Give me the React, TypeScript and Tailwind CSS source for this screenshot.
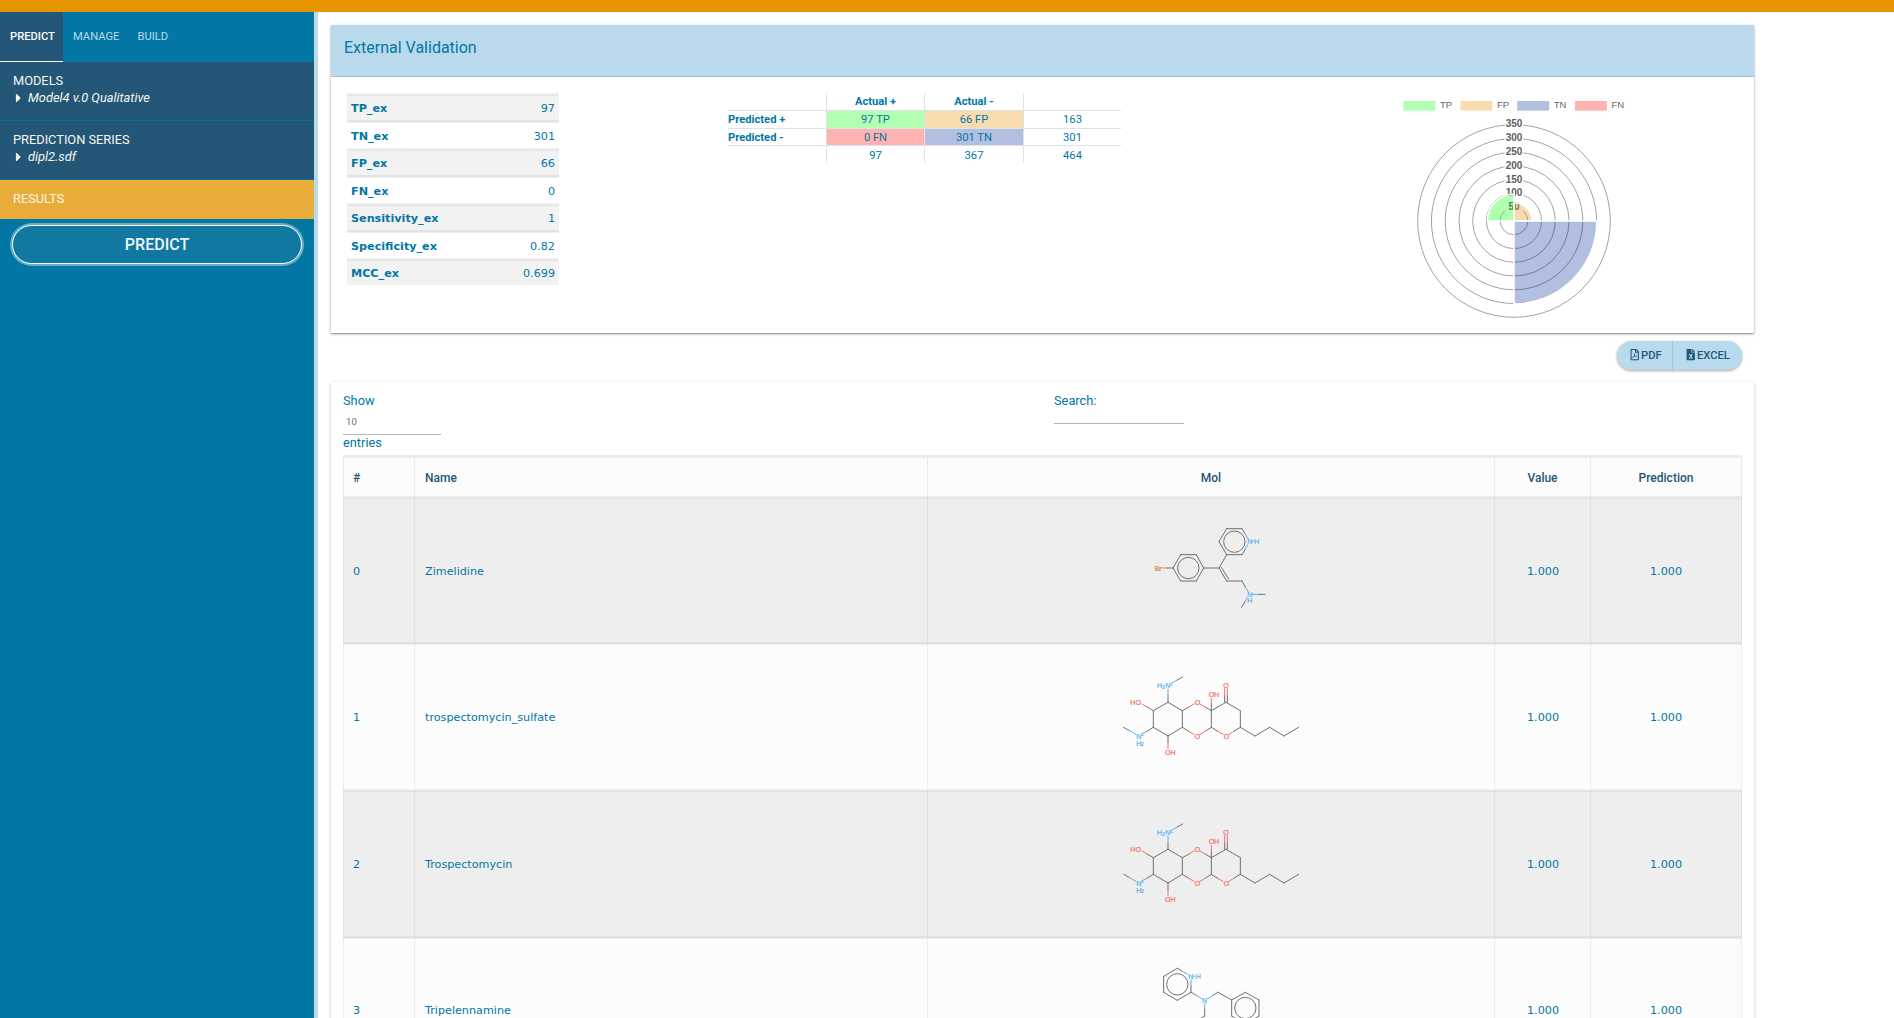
import React from "react";
import { FaCaretRight, FaFileExcel, FaRegFilePdf } from "react-icons/fa";

const GREY = "#707070";
const BLUE = "#5db2ea";
const RED = "#f4716b";
const BROWN = "#e08548";

type Seg = [number, number, number, number, string?];
type Atom = [number, number, string, string, number?];

function Mol({ top, segs, rings, atoms }: { top: number; segs: Seg[]; rings: [number, number][]; atoms: Atom[] }) {
  return (
    <svg className="-mt-[2px] h-[146px] w-[240px]" viewBox={`-28 ${top} 720 438`} fill="none">
      <g strokeWidth="3">
        {segs.map(([a, b, c, d, color], i) => (
          <line key={i} x1={a} y1={b} x2={c} y2={d} stroke={color || GREY} strokeLinecap="round" />
        ))}
        {rings.map(([x, y], i) => (
          <circle key={i} cx={x} cy={y} r="32" stroke={GREY} />
        ))}
      </g>
      {atoms.map(([x, y, t, color, size], i) => (
        <text
          key={i}
          x={x}
          y={y}
          fill={color}
          stroke={color}
          strokeWidth="0.7"
          fontSize={size || 21}
          fontFamily='"Liberation Sans", Arial, sans-serif'
        >
          {t}
        </text>
      ))}
    </svg>
  );
}

const zimelidine = (
  <Mol
    top={-12}
    rings={[[264, 204], [402, 125]]}
    segs={[
      [184, 204, 200, 204, BROWN], [200, 204, 218, 204],
      [218, 204, 241, 164], [241, 164, 288, 164], [288, 164, 310, 204], [310, 204, 288, 243], [288, 243, 241, 243], [241, 243, 218, 204],
      [310, 204, 356, 204], [356, 204, 379, 164], [379, 164, 356, 125], [356, 125, 379, 86], [379, 86, 425, 86],
      [425, 86, 435, 103], [435, 103, 444, 118, BLUE], [379, 164, 425, 164], [425, 164, 434, 149], [434, 149, 442, 134, BLUE],
      [356, 204, 379, 243], [363, 202, 385, 237], [379, 243, 425, 243], [425, 243, 435, 261], [435, 261, 444, 276, BLUE],
      [458, 283, 476, 283, BLUE], [476, 283, 494, 283], [424, 322, 434, 305], [434, 305, 441, 293, BLUE],
    ]}
    atoms={[[163, 213, "Br", BROWN], [441, 132, "N", BLUE], [454, 126, "+", BLUE, 12], [462, 132, "H", BLUE], [441, 291, "N", BLUE], [454, 285, "+", BLUE, 12], [441, 309, "H", BLUE]]}
  />
);

const trospectomycin = (
  <Mol
    top={-24}
    rings={[]}
    segs={[
      [247, 81, 229, 91], [229, 91, 212, 101, BLUE], [203, 117, 203, 137, BLUE], [203, 137, 203, 157],
      [203, 157, 159, 182], [159, 182, 141, 171], [141, 171, 125, 162, RED], [159, 182, 159, 232], [159, 232, 141, 243], [141, 243, 124, 252, BLUE],
      [70, 232, 88, 242], [88, 242, 107, 253, BLUE], [159, 232, 203, 258], [203, 258, 203, 278], [203, 278, 203, 296, RED],
      [203, 258, 246, 232], [246, 232, 246, 182], [246, 182, 203, 157],
      [246, 182, 264, 172], [264, 172, 281, 162, RED], [299, 162, 316, 172, RED], [316, 172, 333, 182],
      [333, 182, 333, 162], [333, 162, 333, 145, RED], [333, 182, 333, 232], [333, 232, 316, 243], [316, 243, 299, 253, RED],
      [246, 232, 264, 243], [264, 243, 281, 253, RED], [333, 182, 377, 157],
      [373, 157, 373, 137], [381, 157, 381, 137], [373, 137, 373, 116, RED], [381, 137, 381, 116, RED],
      [377, 157, 420, 182], [420, 182, 420, 232], [420, 232, 402, 243], [402, 243, 386, 253, RED],
      [333, 232, 351, 243], [351, 243, 368, 253, RED],
      [420, 232, 464, 258], [464, 258, 508, 232], [508, 232, 551, 258], [551, 258, 595, 232],
    ]}
    atoms={[
      [170, 115, "H", BLUE], [185, 117, "2", BLUE, 15], [195, 115, "N", BLUE], [210, 107, "+", BLUE, 12],
      [90, 166, "HO", RED], [108, 267, "N", BLUE], [123, 259, "+", BLUE, 12], [108, 289, "H", BLUE], [122, 289, "2", BLUE, 15],
      [194, 316, "OH", RED], [283, 166, "O", RED], [325, 142, "OH", RED], [369, 115, "O", RED],
      [283, 268, "O", RED], [370, 268, "O", RED],
    ]}
  />
);

const tripelennamine = (
  <Mol
    top={18}
    rings={[[231, 163], [435, 234]]}
    segs={[
      [231, 115, 246, 124], [246, 124, 261, 132, BLUE], [231, 115, 190, 139], [190, 139, 190, 187], [190, 187, 231, 211], [231, 211, 272, 187],
      [272, 187, 272, 167], [272, 167, 272, 149, BLUE], [272, 187, 288, 196], [288, 196, 304, 206, BLUE],
      [322, 206, 338, 196, BLUE], [338, 196, 353, 187], [353, 187, 394, 210],
      [394, 210, 435, 187], [435, 187, 476, 210], [476, 210, 476, 258], [476, 258, 435, 282], [435, 282, 394, 258], [394, 258, 394, 210],
      [313, 221, 313, 238, BLUE], [313, 238, 313, 258], [313, 258, 272, 282],
    ]}
    atoms={[[264, 147, "N", BLUE], [278, 141, "+", BLUE, 12], [286, 147, "H", BLUE], [305, 219, "N", BLUE]]}
  />
);

const results = [
  { id: 0, name: "Zimelidine", mol: zimelidine, h: "h-[146px]" },
  { id: 1, name: "trospectomycin_sulfate", mol: trospectomycin, h: "h-[147px]" },
  { id: 2, name: "Trospectomycin", mol: trospectomycin, h: "h-[147px]" },
  { id: 3, name: "Tripelennamine", mol: tripelennamine, h: "h-[147px]" },
];

const stats = [
  ["TP_ex", "97"],
  ["TN_ex", "301"],
  ["FP_ex", "66"],
  ["FN_ex", "0"],
  ["Sensitivity_ex", "1"],
  ["Specificity_ex", "0.82"],
  ["MCC_ex", "0.699"],
];

const DEJAVU = "font-['DejaVu_Sans',sans-serif]";
const COLS = "grid grid-cols-[71px_513px_567px_96px_152px]";

function Sidebar() {
  return (
    <aside className="w-[318px] shrink-0 border-r-4 border-[#b8daec] bg-[#0277a3] text-white">
      <nav className="flex h-[50px] text-[11.2px] font-medium">
        <div className="w-[63px] border-b border-white bg-[#235677] pt-[16px] pl-[10px] leading-[18px]">PREDICT</div>
        <div className="pt-[16px] pl-[10px] font-normal leading-[18px] text-[#b8daec]">MANAGE</div>
        <div className="pt-[16px] pl-[18px] font-normal leading-[18px] text-[#b8daec]">BUILD</div>
      </nav>
      <div className="text-[12.8px] leading-[17px] text-[#f7f7ee]">
        <section className="h-[59px] border-b border-[#0d6c97] bg-[#235677] pt-[10px] pl-[13px]">
          <div>MODELS</div>
          <div className="flex items-center italic">
            <FaCaretRight className="mr-[3px] -ml-[1px] h-[14px] w-[13px]" />
            Model4 v.0 Qualitative
          </div>
        </section>
        <section className="h-[59px] border-b border-[#0d6c97] bg-[#235677] pt-[10px] pl-[13px]">
          <div>PREDICTION SERIES</div>
          <div className="flex items-center italic">
            <FaCaretRight className="mr-[3px] -ml-[1px] h-[14px] w-[13px]" />
            dipl2.sdf
          </div>
        </section>
        <section className="h-[39px] bg-[#eaac38] pt-[10px] pl-[13px]">RESULTS</section>
      </div>
      <button className="mt-[6px] ml-[12px] flex h-[39px] w-[290px] items-center justify-center rounded-full border border-white bg-[#1178a1] text-[16px] font-medium text-[#eef5f8] shadow-[0_0_0_2px_#66adca]">
        PREDICT
      </button>
    </aside>
  );
}

function PolarChart() {
  const step = 13.76;
  const legend: [number, string, string][] = [
    [23.5, "TP", "#b2ffb2"],
    [80.4, "FP", "#f8dcb0"],
    [137.2, "TN", "#b1bfe0"],
    [195, "FN", "#ffb2b2"],
  ];
  const arc = (r: number, sx: number, sy: number, ex: number, ey: number) =>
    `M134 141 L${134 + sx * r} ${141 + sy * r} A${r} ${r} 0 0 1 ${134 + ex * r} ${141 + ey * r} Z`;
  return (
    <svg className="h-[240px] w-[268px]" viewBox="0 0 268 240" fontFamily='"Liberation Sans", Arial, sans-serif'>
      {legend.map(([x, label, color]) => (
        <g key={label}>
          <rect x={x} y="21" width="32" height="9.6" fill={color} />
          <text x={x + 36.5} y="28" fontSize="9.6" fill="#666">
            {label}
          </text>
        </g>
      ))}
      {[1, 2, 3, 4, 5, 6, 7].map((k) => (
        <g key={k}>
          <circle cx="134" cy="141" r={k * step} fill="none" stroke="#969696" strokeWidth="0.9" />
          <rect x="124.5" y={141 - k * step - 6.5} width="19" height="12" fill="#fff" fillOpacity="0.85" />
          <text x="134" y={141 - k * step + 2.8} fontSize="10" fontWeight="bold" fill="#606060" textAnchor="middle">
            {k * 50}
          </text>
        </g>
      ))}
      <g stroke="#fff" strokeWidth="1.6">
        <path d={arc(26.7, -1, 0, 0, -1)} fill="#00ff00" fillOpacity="0.3" />
        <path d={arc(18.2, 0, -1, 1, 0)} fill="#e68a00" fillOpacity="0.3" />
        <path d={arc(82.8, 1, 0, 0, 1)} fill="#002a98" fillOpacity="0.3" />
      </g>
    </svg>
  );
}

function Confusion() {
  const v = "border-l border-[#dee2e6]";
  return (
    <div className="mt-[16px] grid h-[70px] w-[393px] grid-cols-[98px_98px_99px_98px] grid-rows-[17px_18px_17px_18px] text-center text-[11.2px] leading-[18px]">
      <div />
      <div className={`${v} font-bold`}>Actual +</div>
      <div className={`${v} font-bold`}>Actual -</div>
      <div className={v} />
      <div className="border-t border-[#dee2e6] text-left font-bold">Predicted +</div>
      <div className={`${v} border-t bg-[#b2ffb2]`}>97 TP</div>
      <div className={`${v} border-t bg-[#f8dcb0]`}>66 FP</div>
      <div className={`${v} border-t`}>163</div>
      <div className="border-t border-[#dee2e6] text-left font-bold">Predicted -</div>
      <div className={`${v} border-t bg-[#ffb2b2]`}>0 FN</div>
      <div className={`${v} border-t bg-[#b1bfe0]`}>301 TN</div>
      <div className={`${v} border-t`}>301</div>
      <div className="border-t border-[#dee2e6]" />
      <div className={`${v} border-t leading-[20px]`}>97</div>
      <div className={`${v} border-t leading-[20px]`}>367</div>
      <div className={`${v} border-t leading-[20px]`}>464</div>
    </div>
  );
}

export default function App() {
  return (
    <div className="flex h-[1018px] flex-col overflow-hidden bg-white font-['Roboto',sans-serif] text-[#0277a3]">
      <header className="h-[12px] shrink-0 bg-[#e69500]" />
      <div className="flex min-h-0 flex-1">
        <Sidebar />
        <main className="w-[1436px] pt-[13px] pl-[13px]">
          <section className="h-[308px] shadow-[0_1px_3px_rgba(0,0,0,0.28),0_1px_1px_rgba(0,0,0,0.22)]">
            <div className="h-[52px] border-b border-[#9fc0d2] bg-[#b8daec] pt-[12px] pl-[13px] text-[16px] leading-[22px]">
              External Validation
            </div>
            <div className="flex">
              <div className={`mt-[16px] ml-[16px] w-[212px] text-[11.2px] ${DEJAVU}`}>
                {stats.map(([k, val], i) => (
                  <div
                    key={k}
                    className={
                      i % 2 === 0
                        ? "flex h-[27px] items-center justify-between border-t-2 border-[#eeeeee] bg-[#f2f2f2] px-[4px] pt-[3px] shadow-[inset_0_1px_0_#e2e2e2]"
                        : "flex h-[28px] items-center justify-between border-t-2 border-[#e3e3e3] px-[4px] pt-[4px] shadow-[inset_0_1px_0_#eeeeee]"
                    }
                  >
                    <b>{k}</b>
                    <span>{val}</span>
                  </div>
                ))}
              </div>
              <div className="ml-[169px]">
                <Confusion />
              </div>
              <div className="mt-[3px] ml-[259px]">
                <PolarChart />
              </div>
            </div>
          </section>

          <div className="mt-[8px] mr-[12px] flex h-[29px] justify-end text-[11.2px] font-medium text-[#235677]">
            <div className="flex rounded-full bg-[#b8daec] shadow-[0_1px_3px_rgba(0,0,0,0.35)]">
              <div className="flex w-[56px] items-center border-r border-[#a3c6d9] pl-[12.5px]">
                <FaRegFilePdf className="mr-[2px] -mt-[1px] h-[11.2px] w-[9.5px]" />
                <span className="pt-[1px]">PDF</span>
              </div>
              <div className="flex w-[69px] items-center pl-[12.5px]">
                <FaFileExcel className="mr-[2px] -mt-[1px] h-[11.2px] w-[9.5px]" />
                <span className="pt-[1px]">EXCEL</span>
              </div>
            </div>
          </div>

          <section className="mt-[12px] h-[700px] px-[12px] pt-[9px] shadow-[0_1px_3px_rgba(0,0,0,0.25)]">
            <div className="grid h-[64px] grid-cols-[711px_1fr] text-[12.8px] leading-[19px]">
              <div>
                <div>Show</div>
                <div className="h-[25px] w-[98px] border-b border-[#b4b4b4] pt-[2px] pl-[3px] text-[9.6px] text-[#6f6f6f]">10</div>
                <div className="leading-[16px]">entries</div>
              </div>
              <div>
                <div>Search:</div>
                <div className="h-[14px] w-[130px] border-b border-[#b4b4b4]" />
              </div>
            </div>
            <div className="w-[1399px]">
              <div
                className={`${COLS} h-[41px] border-t-[3px] border-[#ececec] bg-[#fcfcfc] text-[12px] font-medium leading-[38px] text-[#235677]`}
              >
                <div className="border-l border-black/[.07] pt-[1px] pl-[9px]">#</div>
                <div className="border-l border-black/[.07] pt-[1px] pl-[10px]">Name</div>
                <div className="border-l border-black/[.07] pt-[1px] text-center">Mol</div>
                <div className="border-l border-black/[.07] pt-[1px] text-center">Value</div>
                <div className="border-x border-black/[.07] pt-[1px] text-center">Prediction</div>
              </div>
              {results.map((r, i) => (
                <div
                  key={r.id}
                  className={`${COLS} ${r.h} text-[11.2px] ${r.id === 3 ? "leading-[138px]" : "leading-[140px]"} ${DEJAVU} ${
                    i % 2 === 0
                      ? "border-t-2 border-[#ececec] bg-[#eeeeee] shadow-[inset_0_1px_0_#e0e0e0]"
                      : "border-t-2 border-[#e0e0e0] bg-[#fcfcfc] shadow-[inset_0_1px_0_#eeeeee]"
                  }`}
                >
                  <div className="border-l border-black/[.06] pt-[4px] pl-[9px]">{r.id}</div>
                  <div className="border-l border-black/[.06] pt-[4px] pl-[10px]">{r.name}</div>
                  <div className="flex justify-center border-l border-black/[.06]">{r.mol}</div>
                  <div className="border-l border-black/[.06] pt-[4px] pl-px text-center">1.000</div>
                  <div className="border-x border-black/[.06] pt-[4px] text-center">1.000</div>
                </div>
              ))}
            </div>
          </section>
        </main>
      </div>
    </div>
  );
}
